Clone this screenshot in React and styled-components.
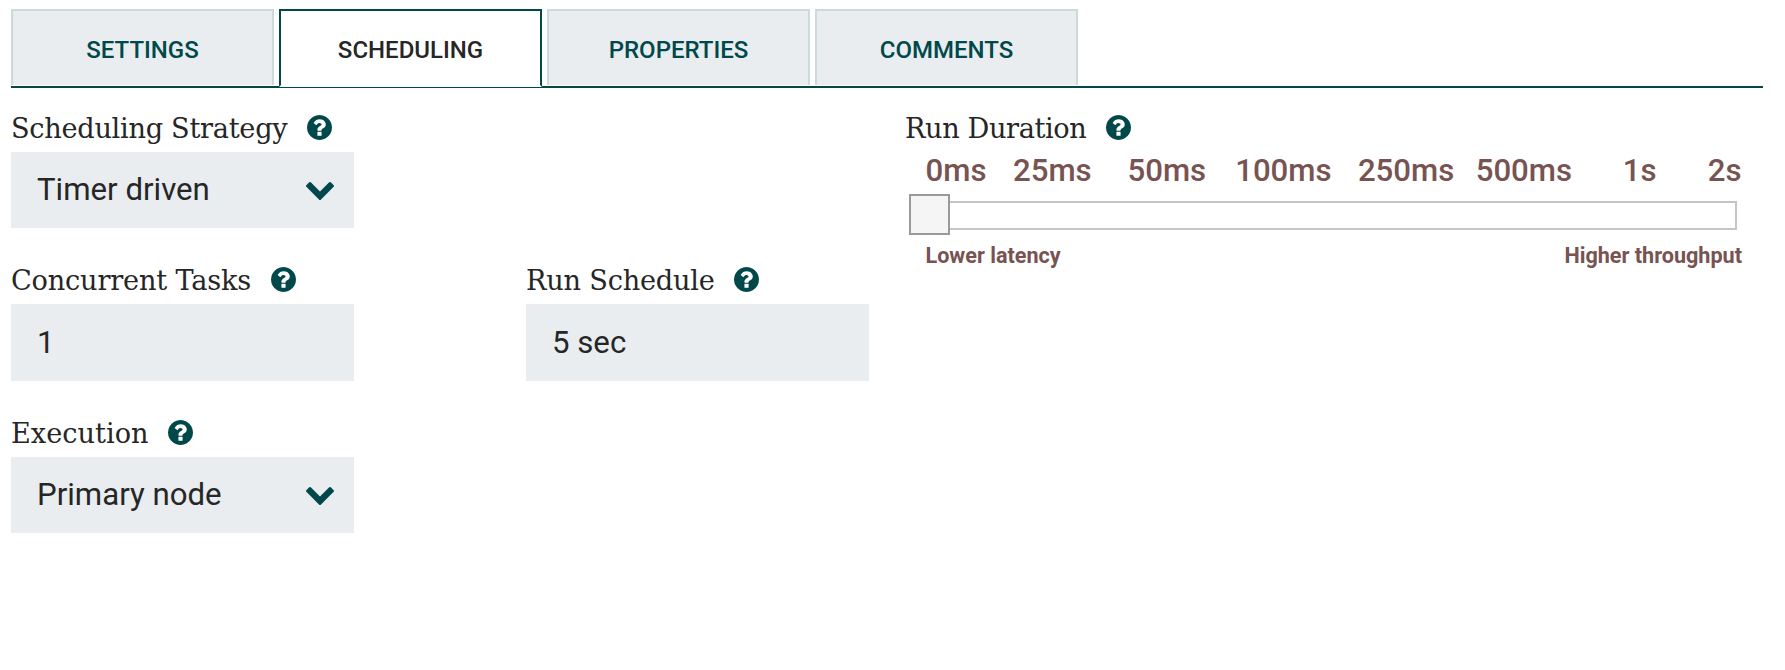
import React, { useState } from "react";
import styled, { createGlobalStyle, css } from "styled-components";

const teal = "#004849";
const ink = "#262626";
const panel = "#e9edf0";
const brown = "#775351";

const GlobalStyle = createGlobalStyle`
  * { box-sizing: border-box; }
  body {
    margin: 0;
    background: #fff;
    color: ${ink};
    font-family: Roboto, "Liberation Sans", sans-serif;
  }
`;

const Dialog = styled.main`
  min-height: 670px;
  padding: 9px 22px 0 11px;
`;

const TabBar = styled.nav`
  display: flex;
  align-items: flex-start;
  gap: 5px;
  height: 79px;
  border-bottom: 2px solid ${teal};
`;

const Tab = styled.button`
  flex: none;
  width: 263px;
  height: 76px;
  margin: 0;
  padding: 4px 0 0;
  border: 2px solid #ccdadb;
  border-bottom: 0;
  border-radius: 0;
  background: ${panel};
  color: ${teal};
  font: 500 24px/28px Roboto, "Liberation Sans", sans-serif;
  text-align: center;
  cursor: pointer;

  ${({ $active }) =>
    $active &&
    css`
      height: 78px;
      border-color: ${teal};
      border-bottom: 2px solid #fff;
      background: #fff;
      color: ${ink};
    `}
`;

const Content = styled.section`
  display: flex;
  padding-top: 16px;
`;

const Fields = styled.div`
  display: flex;
  flex-direction: column;
  gap: 28px;
  width: 894px;
`;

const FieldRow = styled.div`
  display: flex;
  gap: 172px;
`;

const Field = styled.div`
  width: 343px;
`;

const Label = styled.div`
  display: flex;
  align-items: center;
  gap: 19.7px;
  height: 48px;
  font-family: "DejaVu Serif", serif;
  font-size: 27.2px;
  line-height: 50px;
  letter-spacing: ${({ $tracking }) => $tracking}px;
  white-space: nowrap;
`;

const HelpSvg = styled.svg`
  flex: none;
  width: 25px;
  height: 25px;
  margin-bottom: 1px;
  fill: ${teal};
`;

const ChevronSvg = styled.svg`
  flex: none;
  width: 28px;
  height: 18px;
  margin-top: 2px;
  fill: ${teal};
`;

const LabelText = styled.span`
  padding-top: 1px;
`;

const Select = styled.div`
  display: flex;
  align-items: center;
  justify-content: space-between;
  height: 76px;
  padding: 0 20px 0 26px;
  background: ${panel};
  font-size: 31.2px;
  line-height: 76px;
  cursor: pointer;
`;

const Input = styled.input`
  display: block;
  width: 100%;
  height: 77px;
  padding: 0 26px;
  border: 0;
  border-radius: 0;
  outline: 0;
  background: ${panel};
  color: ${ink};
  font: 400 31.2px/77px Roboto, "Liberation Sans", sans-serif;
`;

const Duration = styled.div`
  flex: 1;
`;

const Ticks = styled.div`
  display: flex;
  height: 38px;
  padding-left: 20.6px;
  color: ${brown};
  font-size: 31.2px;
  font-weight: 500;
  line-height: 38px;
`;

const Tick = styled.span`
  margin-left: ${({ $gap }) => $gap}px;
`;

const Track = styled.div`
  position: relative;
  width: 808px;
  height: 29px;
  margin: 11px 0 6px 24px;
  border: 2px solid #c5c5c5;
`;

const Handle = styled.div`
  position: absolute;
  top: -9px;
  left: -22px;
  width: 41px;
  height: 41px;
  border: 2px solid #999;
  background: #f5f5f5;
`;

const Extremes = styled.div`
  display: flex;
  justify-content: space-between;
  padding: 0 21px 0 20.5px;
  color: ${brown};
  font-size: 21.6px;
  font-weight: 700;
  line-height: 40px;
`;

const HelpIcon = () => (
  <HelpSvg viewBox="128 128 1536 1536">
    <path d="M1024 1376v-192q0-14-9-23t-23-9h-192q-14 0-23 9t-9 23v192q0 14 9 23t23 9h192q14 0 23-9t9-23zM1280 704q0-88-55.5-163t-138.5-116-170-41q-243 0-371 213-15 24 8 42l132 100q7 6 19 6 16 0 25-12 53-68 86-92 34-24 86-24 48 0 85.5 26t37.5 59q0 38-20 61t-68 45q-63 28-115.5 86.5t-52.5 125.5v36q0 14 9 23t23 9h192q14 0 23-9t9-23q0-19 21.5-49.5t54.5-49.5q32-18 49-28.5t46-35 44.5-48 28-60.5 12.5-81zM1664 896q0 209-103 385.5t-279.5 279.5-385.5 103-385.5-103-279.5-279.5-103-385.5 103-385.5 279.5-279.5 385.5-103 385.5 103 279.5 279.5 103 385.5z" />
  </HelpSvg>
);

const Chevron = () => (
  <ChevronSvg viewBox="90 532 1612 1036" preserveAspectRatio="none">
    <path d="M1683 808l-742 741q-19 19-45 19t-45-19l-742-741q-19-19-19-45.5t19-45.5l166-165q19-19 45-19t45 19l531 531 531-531q19-19 45-19t45 19l166 165q19 19 19 45.5t-19 45.5z" />
  </ChevronSvg>
);

const FieldLabel = ({ text, tracking }) => (
  <Label $tracking={tracking}>
    <LabelText>{text}</LabelText>
    <HelpIcon />
  </Label>
);

const tabs = ["SETTINGS", "SCHEDULING", "PROPERTIES", "COMMENTS"];

const ticks = [
  ["0ms", 0],
  ["25ms", 26.4],
  ["50ms", 35.9],
  ["100ms", 29],
  ["250ms", 26.3],
  ["500ms", 21.4],
  ["1s", 50.7],
  ["2s", 51.2],
];

export default function App() {
  const [active, setActive] = useState("SCHEDULING");
  return (
    <Dialog>
      <GlobalStyle />
      <TabBar>
        {tabs.map((name) => (
          <Tab key={name} $active={name === active} onClick={() => setActive(name)}>
            {name}
          </Tab>
        ))}
      </TabBar>
      <Content>
        <Fields>
          <Field>
            <FieldLabel text="Scheduling Strategy" tracking={-0.29} />
            <Select>
              Timer driven
              <Chevron />
            </Select>
          </Field>
          <FieldRow>
            <Field>
              <FieldLabel text="Concurrent Tasks" tracking={-0.2} />
              <Input defaultValue="1" />
            </Field>
            <Field>
              <FieldLabel text="Run Schedule" tracking={-0.22} />
              <Input defaultValue="5 sec" />
            </Field>
          </FieldRow>
          <Field>
            <FieldLabel text="Execution" tracking={0} />
            <Select>
              Primary node
              <Chevron />
            </Select>
          </Field>
        </Fields>
        <Duration>
          <FieldLabel text="Run Duration" tracking={-0.4} />
          <Ticks>
            {ticks.map(([name, gap]) => (
              <Tick key={name} $gap={gap}>{name}</Tick>
            ))}
          </Ticks>
          <Track>
            <Handle />
          </Track>
          <Extremes>
            <span>Lower latency</span>
            <span>Higher throughput</span>
          </Extremes>
        </Duration>
      </Content>
    </Dialog>
  );
}
